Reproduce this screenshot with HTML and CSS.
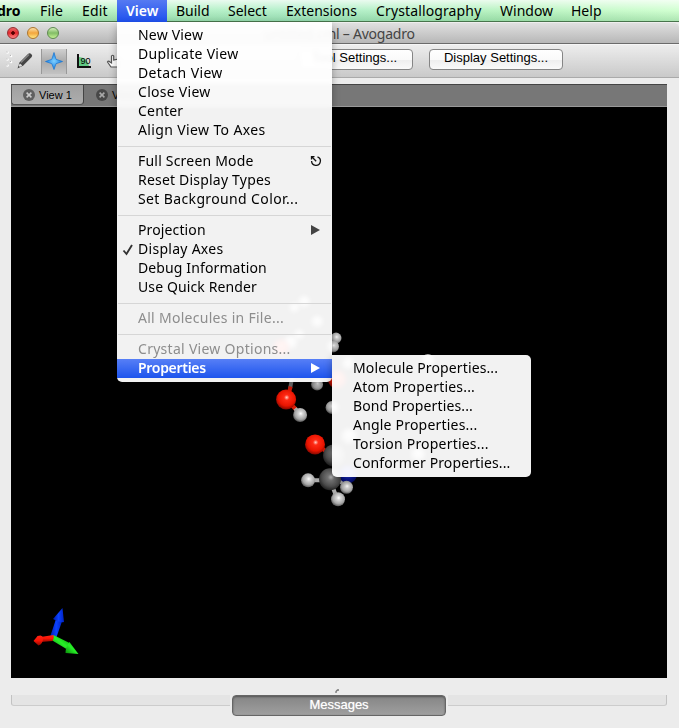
FILE: index.html
```html
<!DOCTYPE html>
<html lang="en">
<head>
<meta charset="utf-8">
<title>Avogadro</title>
<link rel="stylesheet" href="styles.css">
</head>
<body>
<nav class="menubar">
  <span class="mb app">dro</span><span class="mb file">File</span><span class="mb edit">Edit</span><span class="mb view active">View</span><span class="mb build">Build</span><span class="mb select">Select</span><span class="mb ext">Extensions</span><span class="mb crys">Crystallography</span><span class="mb win">Window</span><span class="mb help">Help</span>
</nav>
<header class="titlebar">
  <div class="lights"><i class="light red"></i><i class="light amber"></i><i class="light green"></i></div>
  <span class="title">untitled.cml – Avogadro</span>
</header>
<div class="toolbar">
  <svg class="tools" width="120" height="33" viewBox="0 44 120 33">
    <defs><linearGradient id="press" x2="0" y2="1"><stop stop-color="#d0d0d0"/><stop offset=".5" stop-color="#aaa"/><stop offset="1" stop-color="#c3c3c3"/></linearGradient>
    <radialGradient id="star"><stop stop-color="#7fd0ff"/><stop offset="1" stop-color="#147be0"/></radialGradient></defs>
    <g fill="#fff"><circle cx="7.500" cy="52.500" r="1.300"/><circle cx="11" cy="56" r="1.300"/><circle cx="7.500" cy="59.500" r="1.300"/><circle cx="11" cy="62" r="1.300"/><circle cx="7.500" cy="65.500" r="1.300"/></g>
    <g fill="#b5b5b5"><circle cx="7" cy="52" r=".7"/><circle cx="10.500" cy="55.500" r=".7"/><circle cx="7" cy="59" r=".7"/><circle cx="10.500" cy="61.500" r=".7"/><circle cx="7" cy="65" r=".7"/></g>
    <path d="M17.500 68.500L19.500 62.500 28 54Q29.500 52.700 31.200 54T31.700 57L23.300 65.500Z" fill="#454545"/><path d="M21 62.500l8-8" stroke="#888" stroke-width="1.200"/><path d="M18.500 65.500l1.500-2 2.300 2-2.500 1.500z" fill="#ddd"/>
    <path d="M41 49h26v25H41z" fill="url(#press)"/><path d="M41.500 49v25M66.500 49v25" stroke="#999"/>
    <path d="M54 52.500L56 59.300 62.500 61.500 56 63.700 54 69.500 51.800 63.700 45.500 61.500 51.800 59.300Z" fill="url(#star)" stroke="#1876d2" stroke-width=".7"/>
    <path d="M79 57a10 10 0 0 1 10 9H79z" fill="#62c985"/><path d="M78 54v13h13" stroke="#111" stroke-width="2" fill="none"/><text x="80.500" y="64" class="deg">90</text>
    <path d="M111 67l-3.500-5q.7-1.800 2.500 0l1.500 1v-7q1.200-1.500 2.200 0v4l5-1v8z" fill="#fff" stroke="#555" stroke-width="1.200"/>
  </svg>
  <button class="btn tool">Tool Settings...</button>
  <button class="btn display">Display Settings...</button>
</div>
<main class="workspace">
  <div class="tabs">
    <div class="tab on"><svg width="12" height="12" viewBox="0 0 12 12"><circle cx="6" cy="6" r="6" fill="#606060"/><path d="M3.600 3.600l4.800 4.800M8.400 3.600L3.600 8.400" stroke="#ccc" stroke-width="1.500"/></svg>View 1</div>
    <div class="tab"><svg width="12" height="12" viewBox="0 0 12 12"><circle cx="6" cy="6" r="6" fill="#484848"/><path d="M3.600 3.600l4.800 4.800M8.400 3.600L3.600 8.400" stroke="#aaa" stroke-width="1.500"/></svg>View 2</div>
  </div>
  <svg class="scene" width="656" height="572" viewBox="11 106 656 572">
    <defs>
      <radialGradient id="h" cx=".55" cy=".4" r=".6"><stop stop-color="#fff"/><stop offset=".25" stop-color="#d5d5d5"/><stop offset=".7" stop-color="#a5a5a5"/><stop offset="1" stop-color="#555"/></radialGradient>
      <radialGradient id="o" cx=".53" cy=".4" r=".6"><stop stop-color="#ffd0c8"/><stop offset=".22" stop-color="#ff2a15"/><stop offset=".7" stop-color="#e91400"/><stop offset="1" stop-color="#850800"/></radialGradient>
      <radialGradient id="c" cx=".55" cy=".4" r=".6"><stop stop-color="#bbb"/><stop offset=".25" stop-color="#777"/><stop offset=".7" stop-color="#4d4d4d"/><stop offset="1" stop-color="#222"/></radialGradient>
      <radialGradient id="n" cx=".5" cy=".4" r=".6"><stop stop-color="#4455ff"/><stop offset=".6" stop-color="#0a1aaa"/><stop offset="1" stop-color="#000860"/></radialGradient>
      <linearGradient id="blue"><stop stop-color="#0018a8"/><stop offset=".5" stop-color="#0b42ff"/><stop offset="1" stop-color="#0022c0"/></linearGradient>
      <linearGradient id="green" x1="1" y1="0" x2="0" y2="1"><stop stop-color="#039603"/><stop offset=".5" stop-color="#28f028"/><stop offset="1" stop-color="#078407"/></linearGradient>
      <linearGradient id="redg" x2="0" y2="1"><stop stop-color="#ff2515"/><stop offset=".5" stop-color="#fa1405"/><stop offset="1" stop-color="#8a0800"/></linearGradient>
    </defs>
    <g stroke-width="4" fill="none">
      <path d="M293 372L290 388" stroke="#777"/><path d="M290.500 386l-2 8M286 399l10 10" stroke="#dc1c08"/><path d="M295 408l5 6M308 480h16M330 480l7 18M336 477l10 9" stroke="#aaa"/><path d="M318 445l12 9" stroke="#d81804"/>
    </g>
    <g fill="url(#h)"><circle cx="304" cy="301" r="6"/><circle cx="294" cy="307" r="5"/><circle cx="317" cy="321" r="6"/><circle cx="290" cy="342" r="7"/><circle cx="299" cy="334" r="5"/><circle cx="336" cy="337.500" r="5.500"/><circle cx="333" cy="346" r="6"/><circle cx="317" cy="384" r="6"/><circle cx="332" cy="407" r="6.500"/><circle cx="428" cy="360" r="6.500"/><circle cx="348" cy="363" r="6"/><circle cx="349" cy="436" r="8"/><circle cx="418" cy="454" r="7"/></g>
    <g fill="url(#o)"><circle cx="337" cy="379" r="9"/><circle cx="281" cy="347" r="8"/><circle cx="286" cy="399" r="10"/></g>
    <circle cx="334" cy="455" r="11" fill="url(#c)"/><circle cx="348" cy="474" r="9" fill="url(#n)"/><circle cx="330" cy="479" r="11" fill="url(#c)"/><circle cx="315" cy="444" r="10" fill="url(#o)"/>
    <g fill="url(#h)"><circle cx="300" cy="414.500" r="7"/><circle cx="308" cy="480" r="7"/><circle cx="346.500" cy="487" r="6.500"/><circle cx="338" cy="499" r="7"/></g>
    <path d="M49.500 637l6-18 6.500 1-7 20q-3 1-5.500-3z" fill="url(#blue)"/><path d="M62 608l1.500 14q-5 1-11-3z" fill="url(#blue)"/>
    <path d="M53 635l16 8-3 6-15-9z" fill="url(#green)"/><path d="M69 642l9 12-13-1q0-6 4-11z" fill="url(#green)"/>
    <path d="M53 635l-13 2 1 5 11-1q2-3 1-6z" fill="url(#redg)"/><path d="M33 641l4-5q5-2 5.500 2 0 6-4.500 7.500z" fill="url(#redg)"/>
  </svg>
</main>
<footer class="footer">
  <svg class="grip" width="6" height="4" viewBox="0 0 6 4"><path d="M1 4V2.500L2.500 1H4" fill="none" stroke="#777" stroke-width="1.300"/></svg>
  <div class="dock"><div class="trough left"></div><div class="messages">Messages</div><div class="trough right"></div></div>
</footer>

<div class="menu main">
  <div class="item w2">New View</div><div class="item w3">Duplicate View</div><div class="item w4">Detach View</div><div class="item w3">Close View</div><div class="item w2">Center</div><div class="item w4">Align View To Axes</div>
  <hr>
  <div class="item w2">Full Screen Mode<svg class="mark" width="12" height="12" viewBox="0 0 12 12"><path d="M7.500 1.800A4.400 4.400 0 1 1 1.600 6M2 2l4.200 4.200M1.500 4.500V1.700h3" fill="none" stroke="#111" stroke-width="1.300"/></svg></div><div class="item w2">Reset Display Types</div><div class="item w4">Set Background Color...</div>
  <hr>
  <div class="item w1">Projection<svg class="mark" width="12" height="10" viewBox="0 0 12 10"><path d="M1 0l9 5-9 5z" fill="#444"/></svg></div><div class="item w3"><svg class="check" width="12" height="12" viewBox="0 0 12 12"><path d="M1.500 6.500l3 3.500L10 1" fill="none" stroke="#333" stroke-width="1.900"/></svg>Display Axes</div><div class="item w1">Debug Information</div><div class="item w1">Use Quick Render</div>
  <hr>
  <div class="item off w3">All Molecules in File...</div>
  <hr>
  <div class="item off w3">Crystal View Options...</div><div class="item hot">Properties<svg class="mark" width="12" height="10" viewBox="0 0 12 10"><path d="M1 0l9 5-9 5z" fill="#fff"/></svg></div>
</div>
<div class="menu sub">
  <div class="item w1">Molecule Properties...</div><div class="item w2">Atom Properties...</div><div class="item w1">Bond Properties...</div><div class="item w2">Angle Properties...</div><div class="item w2">Torsion Properties...</div><div class="item w1">Conformer Properties...</div>
</div>
</body>
</html>
```

FILE: styles.css
```css
* { box-sizing: border-box; }
body { margin: 0; width: 679px; height: 728px; overflow: hidden; background: #ececec; font: 14px/19px "Noto Sans", "Open Sans", sans-serif; color: #000; }
.menubar { display: flex; height: 22px; background: linear-gradient(180deg, rgba(255,255,255,.75), rgba(255,255,255,.1) 50%, rgba(30,110,60,.18)), linear-gradient(90deg, #b4f2bb, #abedc5 45%, #b2f2bb 75%, #ccffcc); border-bottom: 1px solid #48744c; line-height: 21px; white-space: nowrap; }
.mb { padding-left: 9px; height: 22px; flex: none; }
.app { width: 31px; padding: 0; text-indent: -3px; font-weight: 700; }
.file { width: 42px; letter-spacing: .2px; }
.edit { width: 44px; letter-spacing: .2px; }
.view { width: 50px; }
.build { width: 52px; }
.select { width: 58px; }
.ext { width: 90px; }
.crys { width: 124px; letter-spacing: .13px; }
.win { width: 71px; }
.help { width: 60px; }
.mb.active { color: #fff; font-weight: 600; background: linear-gradient(#567af2, #1e50ee); }
.titlebar { height: 22px; display: flex; align-items: center; background: linear-gradient(#e0e0e0, #b7b7b7); border-bottom: 1px solid #6b6b6b; border-top: 1px solid #eee; border-radius: 0 5px 0 0; }
.lights { display: flex; gap: 8px; padding-left: 7px; width: 264px; }
.light { width: 12px; height: 12px; border-radius: 50%; border: 1px solid #777; }
.red { background: radial-gradient(circle at 50% 50%, #500 0 1.500px, transparent 2px), linear-gradient(#e86868, #e5262c 50%, #ff8585); border-color: #962b30; }
.amber { background: linear-gradient(#fbe0a9, #f3a53d 50%, #ffe781); border-color: #ad752c; }
.green { background: linear-gradient(#d4efbb, #82bc65 50%, #c6f294); border-color: #5e8950; }
.title { color: #444; white-space: nowrap; letter-spacing: -.24px; }
.toolbar { height: 34px; display: flex; align-items: flex-start; background: linear-gradient(#ededed, #c9c9c9); border-top: 1px solid #f6f6f6; border-bottom: 1px solid #aaa; }
.tools { flex: none; margin-top: -1px; }
.deg { font: 9px "Liberation Sans", sans-serif; }
.btn { height: 21px; margin: 4px 0 0; padding: 0 0 3px; border: 1px solid #858585; border-radius: 4px; background: linear-gradient(#fff, #fafafa 50%, #eee 51%, #fafafa); font: 13px/16px "Liberation Sans", sans-serif; color: #000; white-space: nowrap; }
.tool { width: 114px; margin-left: 179px; padding-right: 3px; }
.display { width: 134px; margin-left: 16px; }
.workspace { margin: 6px 12px 0 11px; }
.tabs { display: flex; height: 23px; background: #777; border-top: 1px solid #444; border-bottom: 1px solid #999; }
.tab { display: flex; align-items: center; gap: 4px; height: 20px; width: 73px; padding-left: 12px; font: 11px "Liberation Sans", sans-serif; white-space: nowrap; }
.tab.on { padding-left: 11px; background: linear-gradient(#a0a0a0, #adadad); border-right: 1px solid #444; border-bottom: 1px solid #555; border-left: 1px solid #555; border-radius: 0 0 4px 3px; }
.scene { display: block; background: #000; margin-top: -1px; border-top: 1px solid #999; }
.footer { display: flex; flex-direction: column; align-items: center; padding-top: 11px; }
.grip { margin-right: 4px; }
.dock { display: flex; width: 656px; margin: 2px 1px 0 0; }
.trough { flex: 1; height: 11px; background: #e4e4e4; border-bottom: 1px solid #ccc; }
.left { border-left: 1px solid #c2c2c2; border-radius: 0 0 0 3px; margin-right: 2px; }
.right { border-right: 1px solid #c2c2c2; border-radius: 0 0 3px 0; margin-left: 2px; }
.messages { width: 214px; height: 21px; border: 1px solid #666; border-radius: 4px; background: linear-gradient(#858585, #9f9f9f); box-shadow: inset 0 1px 2px #555; color: #fff; font: 13px/18px "Liberation Sans", sans-serif; text-align: center; text-shadow: 0 0 1px #ddd; }
.menu { position: absolute; padding: 4px 0; background: rgba(255,255,255,.95); backdrop-filter: blur(2px); box-shadow: 0 4px 9px rgba(0,0,0,.3); }
.main { left: 117px; top: 22px; width: 215px; height: 360px; border-radius: 0 0 5px 5px; }
.sub { left: 332px; top: 355px; width: 199px; height: 122px; border-radius: 0 5px 5px 5px; }
.item { display: flex; align-items: center; height: 19px; padding: 0 10px 2px 21px; white-space: nowrap; line-height: 17px; }
.menu hr { height: 1px; margin: 6px 1px 5px; border: 0; background: #d6d6d6; }
.mark { margin: 1px 0 0 auto; flex: none; }
.check { margin: 2px 4px 0 -16px; flex: none; }
.w1 { letter-spacing: .12px; }
.w2 { letter-spacing: .2px; }
.w3 { letter-spacing: .28px; }
.w4 { letter-spacing: .37px; }
.off { color: #8d8d8d; }
.hot { color: #fff; font-weight: 600; letter-spacing: -.3px; background: linear-gradient(#577ff6, #1d54ed); }
```
